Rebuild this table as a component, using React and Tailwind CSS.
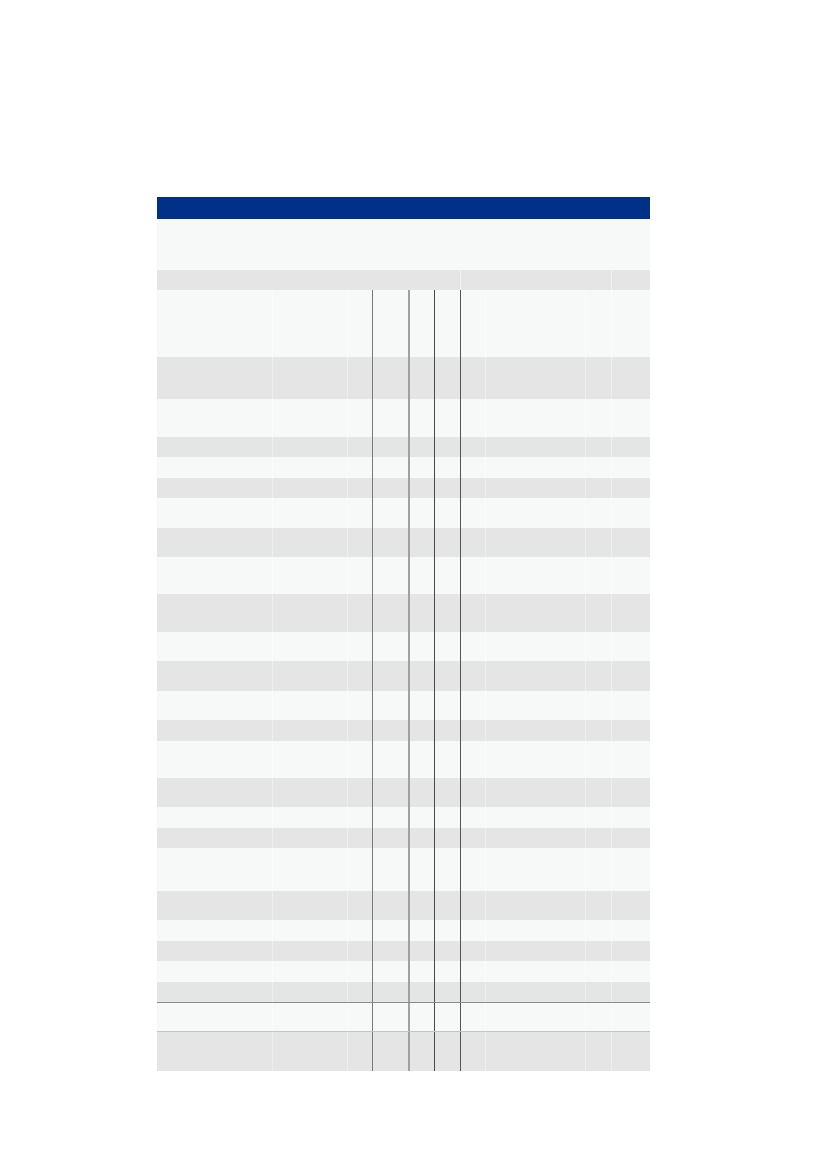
import React from 'react';

// heights of the body rows, from the first striped row under the blue bar
const rowHeights = [51, 20, 67, 42, 38, 20, 21, 20, 30, 29, 37, 38, 29, 30, 29, 21, 37, 29, 21, 20, 43, 29, 21, 20, 21, 20, 30, 39];

// column widths; dark rules sit before columns 3..6
const cols = [115, 75, 25, 36, 26, 26, 25, 100, 26, 39];

const ruleClass = {
    3: "border-l border-[#7a7a7a]",
    4: "border-l-2 border-[#a0a0a0]",
    5: "border-l border-[#4a4a4a]",
    6: "border-l border-[#555555]",
};

function Row({ index, height }) {
    const striped = index % 2 === 1;
    const bg = striped ? "bg-[#e4e5e4]" : "bg-[#f7f9f8]";
    const ruled = index >= 2;
    const isHeader = index === 1;
    const extra =
        index === 26 ? "border-t border-[#8c8c8c] border-b border-b-[#c4c4c4]" : "";

    return (
        <div className={`flex ${bg} ${extra}`} style={{ height }}>
            {cols.map((w, i) => {
                let cls = "";
                if (ruled && ruleClass[i]) cls = ruleClass[i];
                else if (ruled && i > 0) cls = "border-l border-white/40";
                else if (isHeader && (i === 6 || i === 9)) cls = "border-l border-white/50";
                return <div key={i} className={`shrink-0 ${cls}`} style={{ width: w }} />;
            })}
        </div>
    );
}

export default function App() {
    return (
        <div className="min-h-[1169px] w-[827px] bg-white pt-[197px] pl-[157px] font-['Liberation_Sans',sans-serif]">
            <div className="w-[493px]">
                <div className="h-[22px] bg-[#003087]" />
                {rowHeights.map((h, i) => (
                    <Row key={i} index={i} height={h} />
                ))}
            </div>
        </div>
    );
}
